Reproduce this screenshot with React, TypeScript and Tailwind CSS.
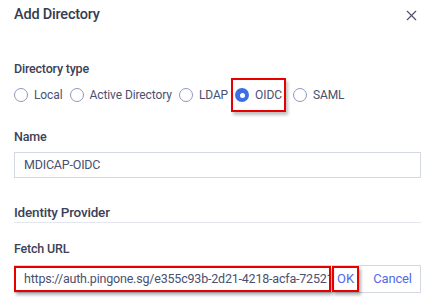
import { X } from "lucide-react";

const types = [
  { id: "local", label: "Local" },
  { id: "ad", label: "Active Directory" },
  { id: "ldap", label: "LDAP" },
  { id: "oidc", label: "OIDC" },
  { id: "saml", label: "SAML" },
];

function Radio({ checked }: { checked: boolean }) {
  return checked ? (
    <span className="flex h-[14px] w-[14px] items-center justify-center rounded-full bg-[#3b6fe3]">
      <span className="h-[5px] w-[5px] rounded-full bg-white" />
    </span>
  ) : (
    <span className="h-[14px] w-[14px] rounded-full border border-[#8f98bd] bg-white" />
  );
}

export default function App() {
  const selected = "oidc";

  return (
    <div className="h-[307px] w-[435px] overflow-hidden bg-white font-['Roboto',sans-serif] text-[#3c4156]">
      <div className="flex h-[30px] items-center justify-between pl-[14px] pr-[15px]">
        <h2 className="text-[14.5px] leading-[18px] font-medium tracking-[-0.2px] text-[#363b4f]">Add Directory</h2>
        <X className="h-[17px] w-[17px] text-[#4a5068]" strokeWidth={1.6} />
      </div>

      <div className="px-[14px]">
        <p className="mt-[31px] text-[12.5px] leading-[16px] font-medium tracking-[-0.2px]">Directory type</p>

        <div className="mt-[10px] flex h-[16px] items-center">
          {types.map((t) => {
            const on = t.id === selected;
            return (
              <div
                key={t.id}
                className={`flex items-center gap-[6px] ${
                  on
                    ? "-my-[9px] mx-[-4px] px-[4px] py-[9px] outline-2 -outline-offset-2 outline-[#e60000] shadow-[2px_3px_3px_rgba(0,0,0,0.25)]"
                    : ""
                } mr-[7px]`}
              >
                <Radio checked={on} />
                <span className="text-[12px] leading-[16px] tracking-[-0.1px] text-[#4a5070]">{t.label}</span>
              </div>
            );
          })}
        </div>

        <p className="mt-[26px] text-[12.5px] leading-[16px] font-medium tracking-[-0.2px]">Name</p>
        <div className="mt-[7px] flex h-[26px] items-center border border-[#d3d8e2] px-[9px] text-[12.5px] tracking-[-0.2px] text-[#4a5070]">
          MDICAP-OIDC
        </div>

        <div className="mt-[25px] border-b border-[#e3e6ee] pb-[1px]">
          <p className="text-[13.5px] leading-[18px] font-medium tracking-[-0.2px]">Identity Provider</p>
        </div>

        <p className="mt-[18px] text-[12.5px] leading-[16px] font-medium tracking-[-0.2px]">Fetch URL</p>
        <div className="mt-[8px] flex h-[28px] items-stretch border-y border-r border-[#d3d8e2]">
          <div className="flex w-[317px] items-center overflow-hidden whitespace-nowrap border-2 border-[#e60000] pl-[8px] text-[12.5px] tracking-[-0.2px] text-[#4a5070] shadow-[2px_3px_3px_rgba(0,0,0,0.3)]">
            https://auth.pingone.sg/e355c93b-2d21-4218-acfa-7252172c1f0a/as
          </div>
          <button className="ml-[1px] flex w-[27px] items-center justify-center border-2 border-[#e60000] text-[13px] text-[#4f6ce8] shadow-[2px_3px_3px_rgba(0,0,0,0.3)]">
            OK
          </button>
          <button className="flex flex-1 items-center justify-center pl-[6px] text-[13px] tracking-[-0.2px] text-[#4f6ce8]">
            Cancel
          </button>
        </div>
      </div>
    </div>
  );
}
